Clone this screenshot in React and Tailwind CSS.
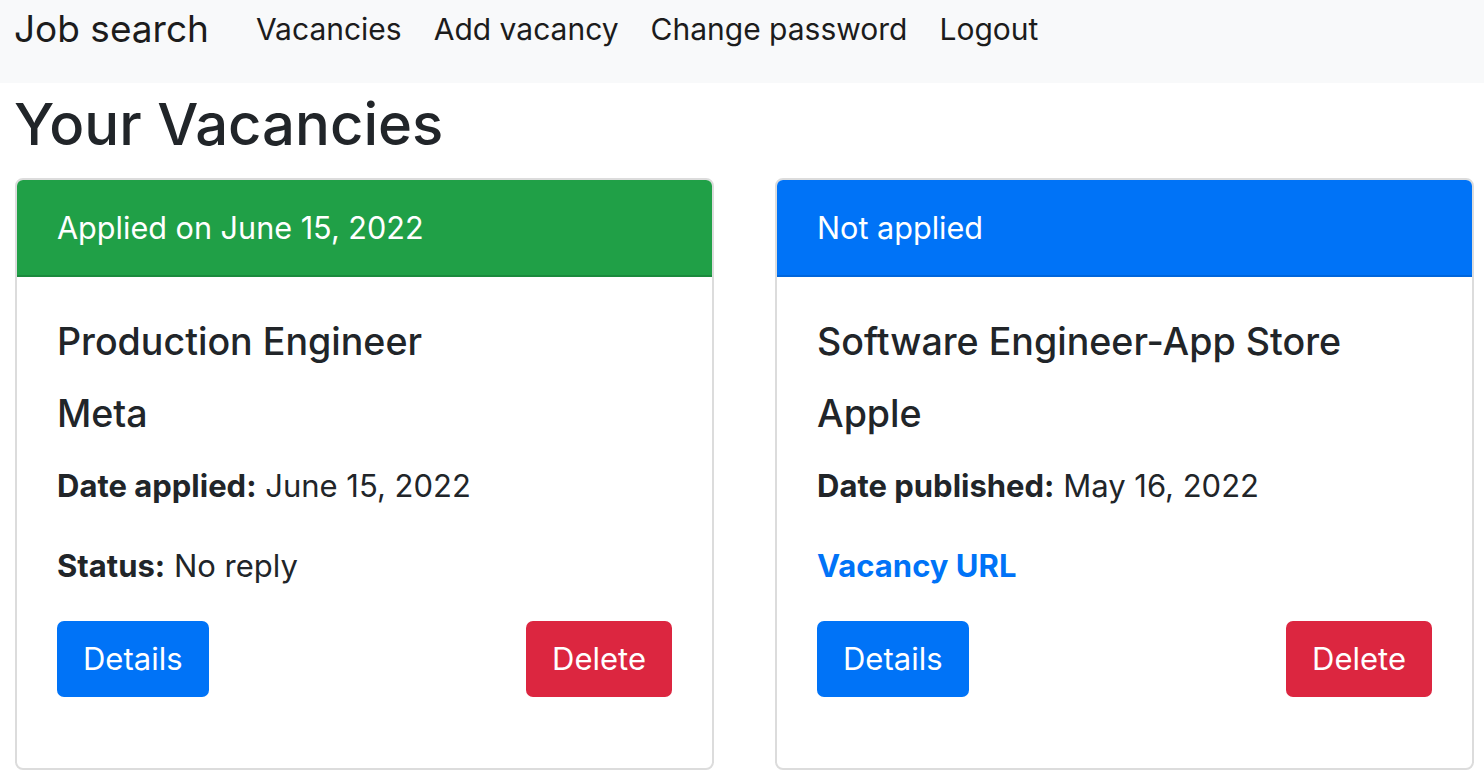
import React from 'react';

const vacancies = [
  {
    id: 1,
    applied: true,
    header: 'Applied on June 15, 2022',
    title: 'Production Engineer',
    company: 'Meta',
    dateLabel: 'Date applied:',
    date: 'June 15, 2022',
    status: 'No reply',
  },
  {
    id: 2,
    applied: false,
    header: 'Not applied',
    title: 'Software Engineer-App Store',
    company: 'Apple',
    dateLabel: 'Date published:',
    date: 'May 16, 2022',
    url: '#',
  },
];

const VacancyCard = ({ vacancy }) => {
  return (
    <div className="w-[699px] h-[592px] border-2 border-[#dcdcdc] rounded-[8px] overflow-hidden bg-white flex flex-col">
      <div
        className={
          vacancy.applied
            ? 'h-[97px] bg-[#20a047] border-b-2 border-[#1b8a3d] text-white flex items-center px-[40px] text-[30.6px]'
            : 'h-[97px] bg-[#0073f7] border-b-2 border-[#0066dc] text-white flex items-center px-[40px] text-[30.6px]'
        }
      >
        {vacancy.header}
      </div>
      <div className="px-[40px] pt-[43px] text-[#212529]">
        <h5 className="text-[37.6px] leading-[43px] font-medium">{vacancy.title}</h5>
        <h5 className="mt-[29px] text-[37.6px] leading-[43px] font-medium">{vacancy.company}</h5>
        <p className="mt-[28px] text-[31px] leading-[45px]">
          <b className="font-bold">{vacancy.dateLabel}</b> {vacancy.date}
        </p>
        {vacancy.applied ? (
          <p className="mt-[35px] text-[31px] leading-[45px]">
            <b className="font-bold">Status:</b> {vacancy.status}
          </p>
        ) : (
          <p className="mt-[35px] text-[31px] leading-[45px]">
            <a href={vacancy.url} className="font-bold text-[#0073f7]">Vacancy URL</a>
          </p>
        )}
        <div className="mt-[33px] flex justify-between">
          <button className="h-[76px] px-[26px] rounded-[7px] bg-[#0073f7] text-white text-[31px]">
            Details
          </button>
          <button className="h-[76px] px-[26px] rounded-[7px] bg-[#dc2640] text-white text-[31px]">
            Delete
          </button>
        </div>
      </div>
    </div>
  );
};

const App = () => {
  return (
    <div className="min-h-screen bg-white text-[#212529]" style={{ fontFamily: 'Inter, "Noto Sans", sans-serif' }}>
      <nav className="h-[83px] bg-[#f8f9fa] flex items-start pt-[6px] pl-[14px]">
        <a href="#" className="text-[37px] leading-[46px] text-[#1c1c1c] mr-[47px]">Job search</a>
        <div className="flex gap-[32px] text-[30px] leading-[46px] text-[#1c1c1c]">
          <a href="#">Vacancies</a>
          <a href="#">Add vacancy</a>
          <a href="#">Change password</a>
          <a href="#">Logout</a>
        </div>
      </nav>
      <h1 className="mt-[5px] ml-[14px] text-[58px] leading-[72px] font-medium">Your Vacancies</h1>
      <div className="mt-[18px] ml-[15px] flex gap-[61px]">
        {vacancies.map(v => (
          <VacancyCard key={v.id} vacancy={v} />
        ))}
      </div>
    </div>
  );
};

export default App;
